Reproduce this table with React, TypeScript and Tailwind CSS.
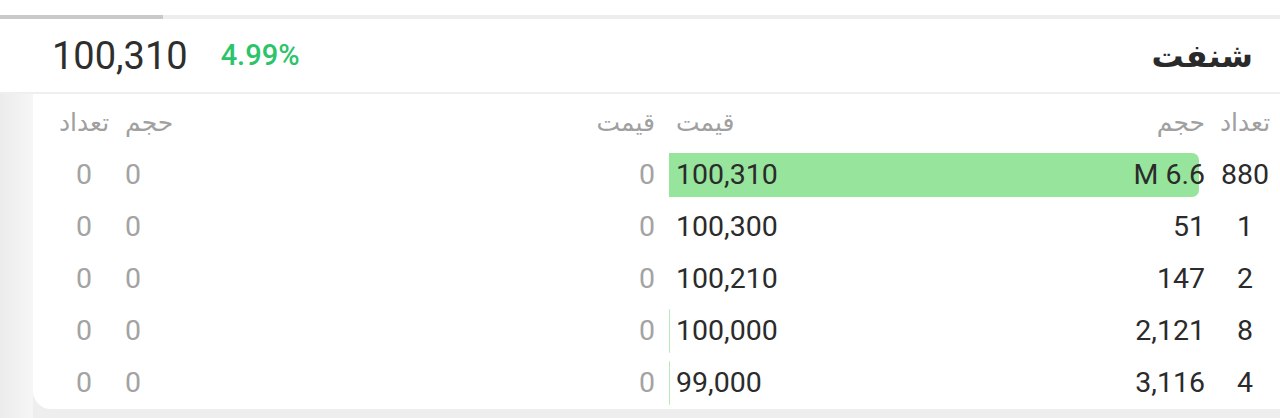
import React from 'react';

type Row = {
  buyCount: string;
  buyVol: string;
  buyPrice: string;
  barWidth: string;
  sellPrice: string;
  sellVol: string;
  sellCount: string;
};

const rows: Row[] = [
  { buyCount: '880', buyVol: 'M 6.6', buyPrice: '100,310', barWidth: '98.9%', sellPrice: '0', sellVol: '0', sellCount: '0' },
  { buyCount: '1', buyVol: '51', buyPrice: '100,300', barWidth: '0', sellPrice: '0', sellVol: '0', sellCount: '0' },
  { buyCount: '2', buyVol: '147', buyPrice: '100,210', barWidth: '0', sellPrice: '0', sellVol: '0', sellCount: '0' },
  { buyCount: '8', buyVol: '2,121', buyPrice: '100,000', barWidth: '1px', sellPrice: '0', sellVol: '0', sellCount: '0' },
  { buyCount: '4', buyVol: '3,116', buyPrice: '99,000', barWidth: '1px', sellPrice: '0', sellVol: '0', sellCount: '0' },
];

const font = "font-['Roboto','DejaVu_Sans',sans-serif]";

export default function App() {
  return (
    <div className={`w-[1280px] h-[418px] bg-white overflow-hidden flex flex-col ${font}`}>
      <div className="h-[15px] bg-white" />
      <div className="h-[4px] bg-[#ededed] flex">
        <div className="w-[163px] bg-[#c9c9c9]" />
      </div>

      {/* symbol header */}
      <div className="h-[73px] flex items-center justify-between pl-[52px] pr-[27px]">
        <div className="flex items-center gap-[33px]">
          <span className="text-[38px] text-[#2e2e2e] leading-none">100,310</span>
          <span className="text-[29px] font-medium text-[#2bc46a] leading-none">4.99%</span>
        </div>
        <span dir="rtl" className="text-[32px] font-bold text-[#2a2a2a] leading-none">شنفت</span>
      </div>
      <div className="h-[2px] bg-[#efefef]" />

      {/* order book */}
      <div className="flex-1 flex bg-[#eeeeee]">
        <div className="w-[33px] bg-linear-to-r from-[#ececec] to-[#f6f6f6]" />
        <div className="flex-1 h-[315px] bg-white rounded-bl-[18px] pt-[3px] pl-[17px]">
          <div className="flex h-[52px] items-center text-[25px] text-[#a0a0a0]">
            <div className="w-[68px] text-center">تعداد</div>
            <div className="w-[7px]" />
            <div className="w-[60px] text-left">حجم</div>
            <div className="flex-1 text-right">قيمت</div>
            <div className="w-[14px]" />
            <div className="w-[536px] flex justify-between pl-[7px]">
              <span>قيمت</span>
              <span>حجم</span>
            </div>
            <div className="w-[5px]" />
            <div className="w-[70px] text-center">تعداد</div>
          </div>

          {rows.map((r, i) => (
            <div key={i} className="flex h-[52px] items-center text-[28.5px] leading-none">
              <div className="w-[68px] text-center text-[#a3a3a3]">{r.sellCount}</div>
              <div className="w-[7px]" />
              <div className="w-[60px] text-left text-[#a3a3a3]">{r.sellVol}</div>
              <div className="flex-1 text-right text-[#a3a3a3]">{r.sellPrice}</div>
              <div className="w-[14px]" />
              <div className="relative w-[536px] h-full flex items-center justify-between pl-[7px] text-[#2b2b2b]">
                {r.barWidth !== '0' && (
                  <div
                    className={`absolute left-0 top-[4px] bottom-[4px] rounded-r-[7px] ${i === 0 ? 'bg-[#97e49c]' : 'bg-[#b8e8bb]'}`}
                    style={{ width: r.barWidth }}
                  />
                )}
                <span className="relative">{r.buyPrice}</span>
                <span className="relative">{r.buyVol}</span>
              </div>
              <div className="w-[5px]" />
              <div className="w-[70px] text-center text-[#2b2b2b]">{r.buyCount}</div>
            </div>
          ))}
        </div>
      </div>
    </div>
  );
}
